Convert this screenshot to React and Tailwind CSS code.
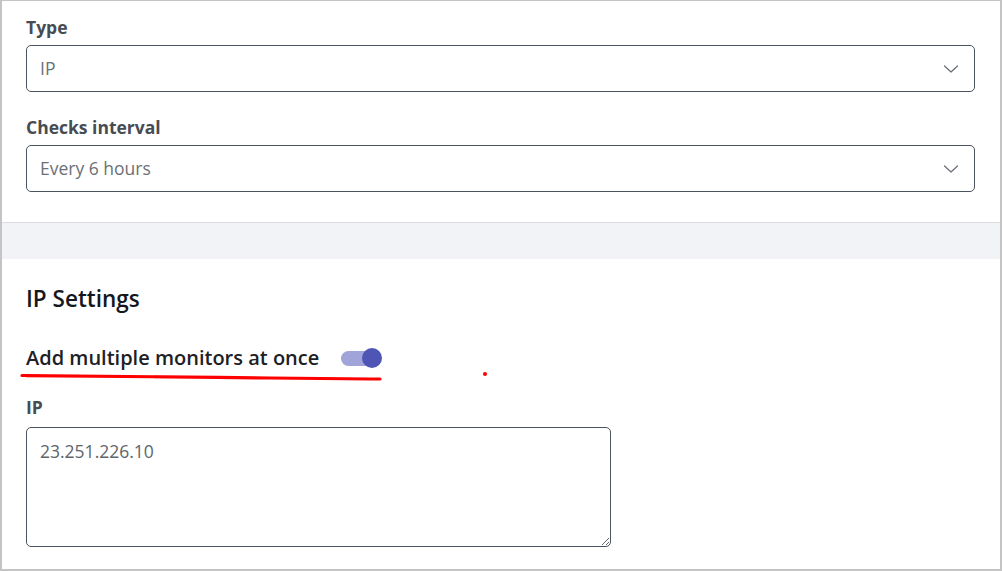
import { useState } from 'react';

function Chevron() {
  return (
    <svg width="16" height="8" viewBox="0 0 16 8" fill="none">
      <path d="M1.5 1 L8 7 L14.5 1" stroke="#686d74" strokeWidth="1.2" strokeLinecap="round" strokeLinejoin="round" />
    </svg>
  );
}

function SelectField({ label, value, mt }) {
  return (
    <div className={mt}>
      <div className="text-[17.5px] leading-[24px] font-bold text-[#474c53]">{label}</div>
      <div className="mt-[6px] h-[47px] border border-[#4b535e] rounded-[5px] flex items-center justify-between pl-[13px] pr-[15px]">
        <span className="text-[17.5px] text-[#6c7077]">{value}</span>
        <Chevron />
      </div>
    </div>
  );
}

export default function App() {
  const [multi, setMulti] = useState(true);

  return (
    <div
      className="w-[1002px] h-[571px] bg-white border-t border-l-2 border-r-2 border-b-2 border-[#c4c4c4] overflow-hidden relative"
      style={{ fontFamily: '"Open Sans", "Liberation Sans", sans-serif' }}
    >
      {/* General */}
      <div className="pl-[24px] pr-[25px] pt-[14px] pb-[30px] border-b border-[#dcdde1]">
        <SelectField label="Type" value="IP" />
        <SelectField label="Checks interval" value="Every 6 hours" mt="mt-[23px]" />
      </div>

      <div className="h-[36px] bg-[#f2f3f7]" />

      {/* IP Settings */}
      <div className="px-[24px] pt-[25px]">
        <h2 className="text-[22.5px] leading-[30px] font-semibold text-[#14171b]">IP Settings</h2>

        <div className="relative mt-[31px] h-[26px] flex items-center gap-[22px]">
          <span className="text-[20px] leading-[26px] font-semibold text-[#1d2025]">Add multiple monitors at once</span>
          <button
            onClick={() => setMulti(m => !m)}
            className="relative w-[41px] h-[20px] flex items-center"
          >
            <span className={`block w-[36px] h-[15px] rounded-full ${multi ? 'bg-[#a1a4d9]' : 'bg-gray-300'}`} />
            <span className={`absolute top-0 w-[20px] h-[20px] rounded-full ${multi ? 'right-0 bg-[#4f55b5]' : 'left-0 bg-white shadow'}`} />
          </button>
          {/* red annotation */}
          <svg className="absolute left-[-6px] top-[27px] pointer-events-none" width="372" height="12" viewBox="0 0 372 12">
            <path d="M2 3.5 C 60 3.5, 160 5, 250 6 S 340 7, 360 7" stroke="#ff0000" strokeWidth="3.2" fill="none" strokeLinecap="round" />
          </svg>
          <span className="absolute left-[457px] top-[27px] w-[4px] h-[4px] rounded-full bg-[#ff0000]" />
        </div>

        <div className="mt-[24px] text-[17.5px] leading-[24px] font-bold text-[#474c53]">IP</div>
        <textarea
          defaultValue="23.251.226.10"
          className="mt-[8px] block w-[585px] h-[120px] border border-[#4b535e] rounded-[5px] pl-[13px] pr-[13px] pt-[11px] text-[17.5px] leading-[24px] text-[#60656c] outline-none resize-y"
          style={{ fontFamily: '"Open Sans", "Liberation Sans", sans-serif' }}
        />
      </div>
    </div>
  );
}
